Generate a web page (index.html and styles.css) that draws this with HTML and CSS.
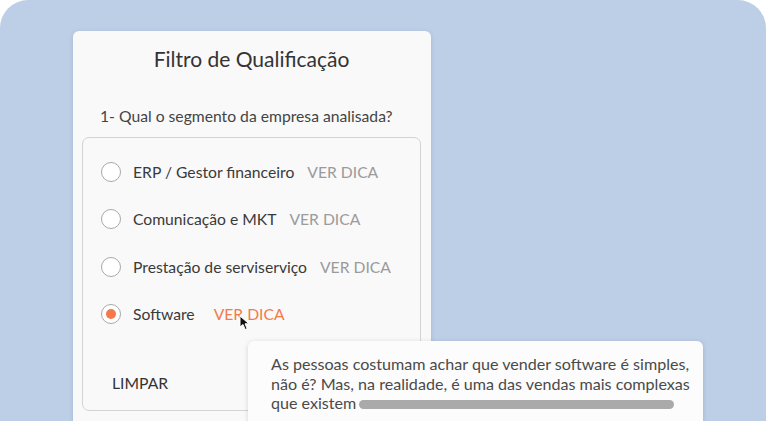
FILE: index.html
```html
<!DOCTYPE html>
<html lang="pt-BR">
<head>
<meta charset="utf-8">
<title>Filtro de Qualificação</title>
<link rel="stylesheet" href="styles.css">
</head>
<body>
<div class="frame">
  <div class="card">
    <h1 class="title">Filtro de Qualificação</h1>
    <p class="question">1- Qual o segmento da empresa analisada?</p>
    <div class="options">
      <div class="option"><span class="radio"></span><span class="label">ERP / Gestor financeiro</span><span class="hint">VER DICA</span></div>
      <div class="option"><span class="radio"></span><span class="label">Comunicação e MKT</span><span class="hint">VER DICA</span></div>
      <div class="option"><span class="radio"></span><span class="label">Prestação de serviserviço</span><span class="hint">VER DICA</span></div>
      <div class="option selected"><span class="radio"></span><span class="label">Software</span><span class="hint active">VER DICA<svg class="cursor" width="14" height="16" viewBox="0 0 14 16"><path d="M1 1 L1 12 L4 9.5 L6.2 14.5 L8.2 13.6 L6 8.8 L10 8.8 Z" fill="#111" stroke="#fff" stroke-width="1" stroke-linejoin="round"/></svg></span></div>
      <div class="actions"><span class="clear">LIMPAR</span></div>
    </div>
  </div>
  <div class="tooltip">
    <p class="tip-text">As pessoas costumam achar que vender software é simples, não é? Mas, na realidade, é uma das vendas mais complexas que existem <span class="bar"></span></p>
  </div>
</div>
</body>
</html>
```
FILE: styles.css
```css
* { box-sizing: border-box; }
html, body { margin: 0; padding: 0; background: #ffffff; }
body {
  width: 766px;
  height: 421px;
  overflow: hidden;
  font-family: Lato, "Open Sans", sans-serif;
}
.frame {
  position: relative;
  width: 766px;
  height: 460px;
  background: #bdcfe7;
  border-radius: 28px;
  padding-top: 31px;
  padding-left: 73px;
}
.card {
  width: 358px;
  height: 420px;
  background: #f9f9f9;
  border-radius: 6px;
  box-shadow: 0 1px 4px rgba(60, 80, 110, 0.18);
  padding: 14px 10px 0 9px;
}
.title {
  margin: 0;
  font-size: 21px;
  font-weight: 400;
  line-height: 28px;
  text-align: center;
  color: #333;
}
.question {
  margin: 33px 0 0 18px;
  font-size: 15.7px;
  line-height: 20px;
  color: #444;
}
.options {
  margin-top: 11px;
  border: 1px solid #d3d3d3;
  border-radius: 7px;
  padding: 10px 0 17px 18px;
}
.option {
  display: flex;
  align-items: center;
  height: 47.5px;
}
.radio {
  width: 20px;
  height: 20px;
  border: 1.5px solid #a9a9a9;
  border-radius: 50%;
  background: #fff;
  display: flex;
  align-items: center;
  justify-content: center;
  flex: none;
}
.selected .radio::after {
  content: "";
  width: 10px;
  height: 10px;
  border-radius: 50%;
  background: #f47a4b;
}
.label {
  margin-left: 12px;
  font-size: 15.7px;
  color: #3a3a3a;
}
.hint {
  position: relative;
  margin-left: 13px;
  font-size: 15.7px;
  color: #9b9b9b;
}
.hint.active {
  margin-left: 19px;
  color: #f47a4b;
}
.cursor {
  position: absolute;
  left: 25px;
  top: 10px;
}
.actions {
  margin-top: 35px;
  padding-left: 11px;
  height: 20px;
  line-height: 20px;
}
.clear {
  font-size: 15.7px;
  color: #333;
}
.tooltip {
  position: absolute;
  left: 248px;
  top: 341px;
  width: 455px;
  height: 100px;
  background: #fcfcfc;
  border-radius: 6px;
  box-shadow: 0 1px 5px rgba(60, 80, 110, 0.22);
  padding: 13px 10px 0 23px;
}
.tip-text {
  margin: 0;
  font-size: 16.1px;
  line-height: 19.5px;
  color: #4a4a4a;
}
.bar {
  display: inline-block;
  width: 315px;
  height: 9px;
  border-radius: 5px;
  background: #aaaaaa;
  margin-left: -1px;
  vertical-align: 0px;
}
```
